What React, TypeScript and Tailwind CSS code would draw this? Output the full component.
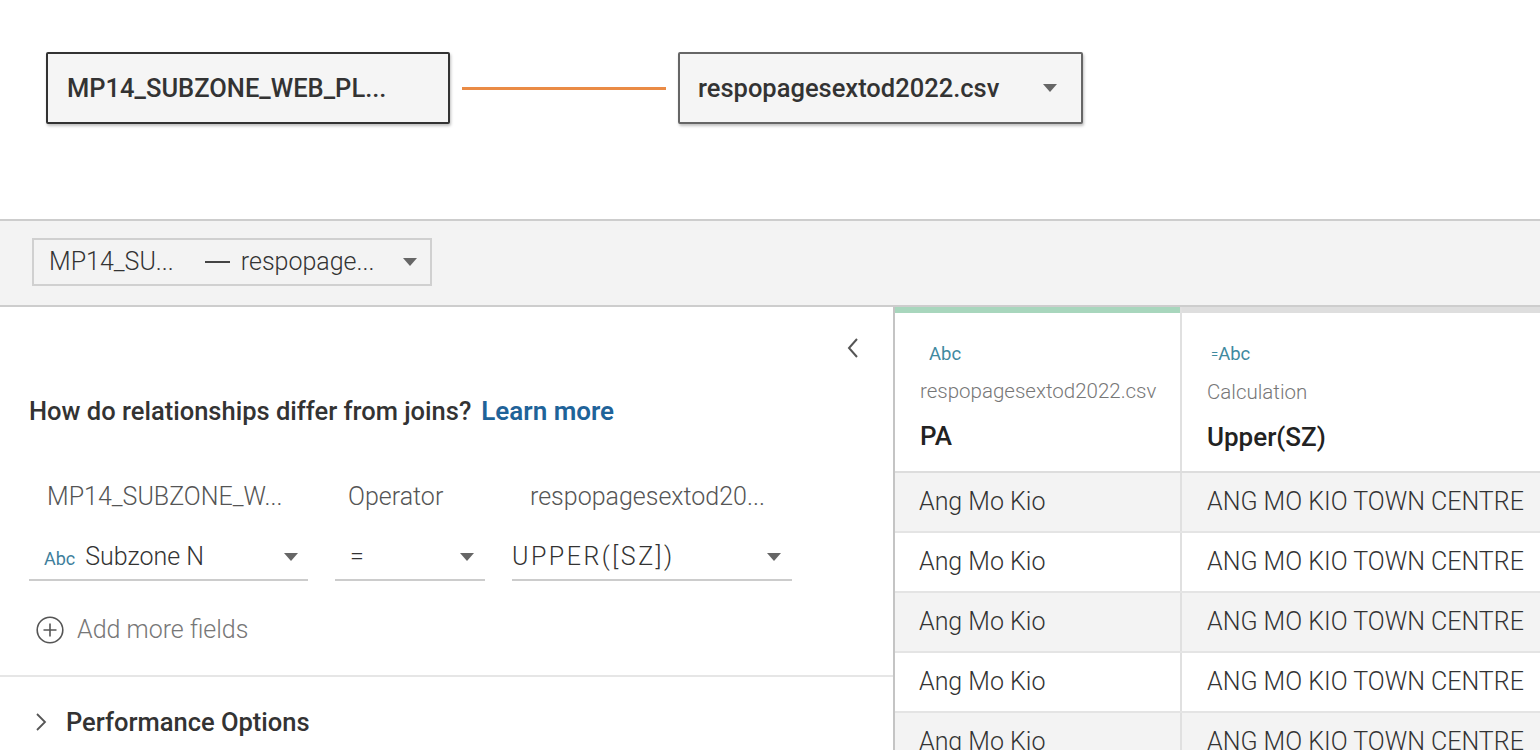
import React from 'react';

const Caret = ({ className = '' }: { className?: string }) => (
  <svg width="16" height="10" viewBox="0 0 16 10" className={className}>
    <path d="M1 1 L15 1 L8 9 Z" fill="#666" />
  </svg>
);

const rows = Array.from({ length: 5 }, () => ({ pa: 'Ang Mo Kio', sz: 'ANG MO KIO TOWN CENTRE' }));

export default function App() {
  return (
    <div
      className="w-[1540px] h-[750px] overflow-hidden bg-white text-[#333]"
      style={{ fontFamily: 'Roboto, "Liberation Sans", sans-serif' }}
    >
      {/* CANVAS */}
      <div className="h-[221px] border-b-2 border-[#cdcdcd] pl-[46px] pt-[52px]">
        <div className="flex items-center">
          <div className="w-[404px] h-[72px] border-2 border-[#333] bg-[#f5f5f5] rounded-[2px] shadow-[1px_2px_3px_rgba(0,0,0,0.25)] flex items-center pl-[19px]">
            <span className="text-[25.5px] font-medium">MP14_SUBZONE_WEB_PL...</span>
          </div>
          <div className="w-[204px] h-[3px] bg-[#ea8b45] mx-[12px]" />
          <div className="w-[405px] h-[72px] border-2 border-[#666] bg-[#f5f5f5] rounded-[2px] shadow-[1px_2px_3px_rgba(0,0,0,0.25)] flex items-center justify-between pl-[18px] pr-[23px]">
            <span className="text-[25.5px] font-medium">respopagesextod2022.csv</span>
            <Caret />
          </div>
        </div>
      </div>

      {/* TOOLBAR */}
      <div className="h-[86px] bg-[#f3f3f3] border-b-2 border-[#cdcdcd] pl-[32px] flex items-center">
        <div className="w-[400px] h-[48px] border-2 border-[#d0d0d0] bg-[#f3f3f3] flex items-center justify-between pl-[15px] pr-[12px] mt-[-2px]">
          <span className="text-[25px] font-light text-[#333] whitespace-nowrap flex items-center">
            <span>MP14_SU...</span>
            <span className="ml-[31px] inline-block w-[25px] h-[1.5px] bg-[#444]" />
            <span className="ml-[11px]">respopage...</span>
          </span>
          <Caret />
        </div>
      </div>

      {/* MAIN */}
      <div className="flex h-[443px]">
        <div className="w-[895px] shrink-0 border-r-2 border-[#c4c4c4] flex flex-col">
          <div className="flex justify-end pr-[34px] pt-[30px]">
            <svg width="12" height="22" viewBox="0 0 12 22">
              <path d="M10 2 L2 11 L10 20" fill="none" stroke="#555" strokeWidth="2" />
            </svg>
          </div>
          <div className="pl-[29px] mt-[37px] h-[30px] flex items-center whitespace-nowrap">
            <span className="text-[25.5px] font-medium">How do relationships differ from joins?</span>
            <span className="text-[26px] font-semibold text-[#1f6399] ml-[10px]">Learn more</span>
          </div>

          <div className="pl-[29px] mt-[56px] flex text-[25px] leading-[30px] font-light text-[#555] whitespace-nowrap">
            <div className="w-[279px] pl-[18px]">MP14_SUBZONE_W...</div>
            <div className="w-[150px] ml-[27px] pl-[13px]">Operator</div>
            <div className="w-[280px] ml-[27px] pl-[18px]">respopagesextod20...</div>
          </div>

          <div className="pl-[29px] mt-[23px] flex text-[25px] font-light text-[#333]">
            <div className="w-[279px] h-[46px] border-b-2 border-[#ccc] flex items-center justify-between pl-[15px] pr-[9px]">
              <span className="flex items-baseline">
                <span className="text-[18px] font-normal text-[#3f7f9c] mr-[10px]">Abc</span>
                <span>Subzone N</span>
              </span>
              <Caret />
            </div>
            <div className="w-[150px] h-[46px] border-b-2 border-[#ccc] ml-[27px] flex items-center justify-between pl-[15px] pr-[10px]">
              <span>=</span>
              <Caret />
            </div>
            <div className="w-[280px] h-[46px] border-b-2 border-[#ccc] ml-[27px] flex items-center justify-between pr-[10px]">
              <span className="tracking-[2.5px]">UPPER([SZ])</span>
              <Caret />
            </div>
          </div>

          <div className="pl-[36px] mt-[35px] flex items-center text-[25px] leading-[28px] font-light text-[#777]">
            <svg width="28" height="28" viewBox="0 0 28 28">
              <circle cx="14" cy="14" r="12.8" fill="none" stroke="#555" strokeWidth="1.6" />
              <path d="M14 7.5 V20.5 M7.5 14 H20.5" stroke="#555" strokeWidth="1.6" />
            </svg>
            <span className="ml-[13px]">Add more fields</span>
          </div>

          <div className="mt-[31px] border-t-2 border-[#e6e6e6]" />

          <div className="pl-[35px] mt-[30px] flex items-center text-[25.5px] leading-[30px] font-medium">
            <svg width="12" height="20" viewBox="0 0 12 20">
              <path d="M2 2 L10 10 L2 18" fill="none" stroke="#555" strokeWidth="1.8" />
            </svg>
            <span className="ml-[19px]">Performance Options</span>
          </div>
        </div>

        {/* TABLE */}
        <div className="flex-1 flex flex-col">
          <div className="flex shrink-0 h-[166px] border-b-2 border-[#ddd]">
            <div className="w-[287px] border-r-2 border-[#e0e0e0] flex flex-col">
              <div className="h-[6px] bg-[#a8d6bd]" />
              <div className="pl-[25px] pt-[29px]">
                <div className="text-[18.5px] text-[#3f8a9f] pl-[9px] leading-[24px]">Abc</div>
                <div className="text-[20.5px] font-light text-[#777] mt-[13px] leading-[24px]">respopagesextod2022.csv</div>
                <div className="text-[26px] font-medium text-[#222] mt-[18px] leading-[30px]">PA</div>
              </div>
            </div>
            <div className="flex-1 flex flex-col">
              <div className="h-[6px] bg-[#dedede]" />
              <div className="pl-[25px] pt-[29px]">
                <div className="text-[18.5px] text-[#3f8a9f] pl-[4px] leading-[24px]">
                  <span className="text-[13px] align-middle">=</span>Abc
                </div>
                <div className="text-[20.5px] font-light text-[#777] mt-[13px] leading-[24px]">Calculation</div>
                <div className="text-[26px] font-medium text-[#222] mt-[18px] leading-[30px]">Upper(SZ)</div>
              </div>
            </div>
          </div>
          {rows.map((r, i) => (
            <div
              key={i}
              className={`flex shrink-0 h-[60px] border-b-2 border-[#e4e4e4] text-[25px] font-light text-[#333] ${i % 2 === 0 ? 'bg-[#f3f3f3]' : 'bg-white'}`}
            >
              <div className="w-[287px] border-r-2 border-[#e0e0e0] flex items-center pl-[24px]">{r.pa}</div>
              <div className="flex-1 flex items-center pl-[25px] whitespace-nowrap">{r.sz}</div>
            </div>
          ))}
        </div>
      </div>
    </div>
  );
}
